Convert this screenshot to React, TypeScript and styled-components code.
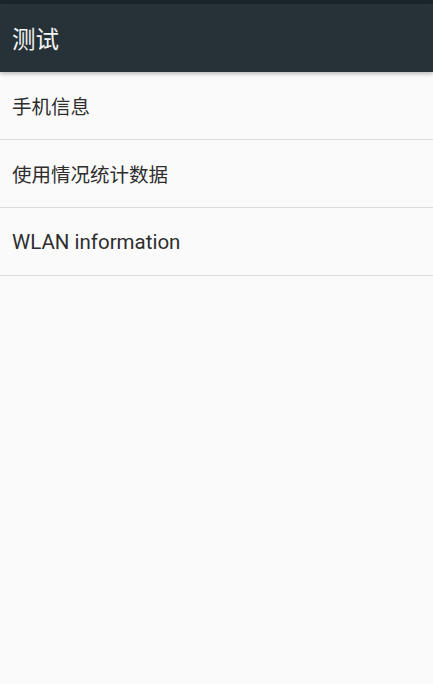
import React from "react";
import styled, { createGlobalStyle } from "styled-components";

const Global = createGlobalStyle`
  html, body { margin: 0; padding: 0; background: #fafafa; }
  body { font-family: Roboto, "Noto Sans CJK SC", sans-serif; }
`;

const Page = styled.div`
  width: 433px;
  height: 684px;
  background: #fafafa;
  display: flex;
  flex-direction: column;
  overflow: hidden;
`;

const StatusBar = styled.div`
  height: 4px;
  background: #1c2529;
  flex: none;
`;

const Toolbar = styled.header`
  height: 68px;
  background: #263238;
  display: flex;
  align-items: center;
  padding: 0 12px;
  box-shadow: 0 2px 4px rgba(0, 0, 0, 0.25);
  position: relative;
  z-index: 1;
  flex: none;
`;

const Title = styled.h1`
  margin: 0;
  font-family: Roboto, "Noto Sans CJK SC", sans-serif;
  font-weight: 400;
  font-size: 23.5px;
  color: #f5f5f5;
`;

const List = styled.ul`
  list-style: none;
  margin: 0;
  padding: 0;
`;

const Item = styled.li<{ $cjk?: boolean }>`
  height: 67px;
  display: flex;
  align-items: center;
  padding: 0 12px;
  border-bottom: 1px solid #dcdcdc;
  font-size: ${(p) => (p.$cjk ? "19.5px" : "20.5px")};
  color: #2e2e2e;
  font-family: Roboto, "Noto Sans CJK SC", sans-serif;
`;

const items = [
  { label: "手机信息", cjk: true },
  { label: "使用情况统计数据", cjk: true },
  { label: "WLAN information", cjk: false },
];

export default function App() {
  return (
    <Page>
      <Global />
      <StatusBar />
      <Toolbar>
        <Title>测试</Title>
      </Toolbar>
      <List>
        {items.map((t) => (
          <Item key={t.label} $cjk={t.cjk}>
            {t.label}
          </Item>
        ))}
      </List>
    </Page>
  );
}
